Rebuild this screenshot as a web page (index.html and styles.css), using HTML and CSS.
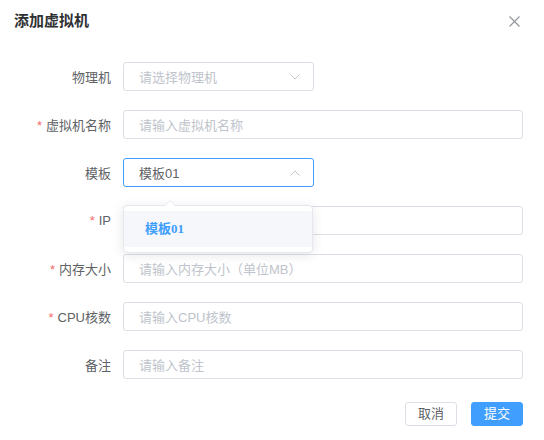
FILE: index.html
```html
<!DOCTYPE html>
<html lang="zh-CN">
<head>
<meta charset="utf-8">
<title>添加虚拟机</title>
<link rel="stylesheet" href="styles.css">
</head>
<body>
<div class="dialog">
  <div class="header">
    <span class="title">添加虚拟机</span>
    <svg class="close" width="11" height="11" viewBox="0 0 11 11"><path d="M0.5 0.5 L10.5 10.5 M10.5 0.5 L0.5 10.5" stroke="#909399" stroke-width="1.1" fill="none"/></svg>
  </div>
  <div class="form">
    <div class="row">
      <label class="label">物理机</label>
      <div class="select">
        <span class="placeholder">请选择物理机</span>
        <svg class="arrow" width="10" height="6" viewBox="0 0 10 6"><path d="M0.5 0.5 L5 5 L9.5 0.5" stroke="#C0C4CC" stroke-width="1" fill="none"/></svg>
      </div>
    </div>
    <div class="row">
      <label class="label"><span class="req">*</span>虚拟机名称</label>
      <div class="input"><span class="placeholder">请输入虚拟机名称</span></div>
    </div>
    <div class="row">
      <label class="label">模板</label>
      <div class="select-wrap">
        <div class="select focus">
          <span class="value">模板01</span>
          <svg class="arrow" width="10" height="6" viewBox="0 0 10 6"><path d="M0.5 5.5 L5 1 L9.5 5.5" stroke="#C0C4CC" stroke-width="1" fill="none"/></svg>
        </div>
        <div class="dropdown">
          <div class="popper-arrow"></div>
          <div class="option">模板01</div>
        </div>
      </div>
    </div>
    <div class="row">
      <label class="label"><span class="req">*</span>IP</label>
      <div class="input"></div>
    </div>
    <div class="row">
      <label class="label"><span class="req">*</span>内存大小</label>
      <div class="input"><span class="placeholder">请输入内存大小（单位MB）</span></div>
    </div>
    <div class="row">
      <label class="label"><span class="req">*</span>CPU核数</label>
      <div class="input"><span class="placeholder">请输入CPU核数</span></div>
    </div>
    <div class="row">
      <label class="label">备注</label>
      <div class="input"><span class="placeholder">请输入备注</span></div>
    </div>
  </div>
  <div class="footer">
    <button class="btn">取消</button>
    <button class="btn primary">提交</button>
  </div>
</div>
</body>
</html>
```
FILE: styles.css
```css
* { box-sizing: border-box; }
html, body { margin: 0; padding: 0; background: #fff; }
body {
  font-family: "Liberation Sans", "Noto Sans CJK SC", sans-serif;
  color: #606266;
}
.dialog {
  width: 544px;
  height: 440px;
  background: #fff;
}
.header {
  display: flex;
  justify-content: space-between;
  align-items: center;
  padding: 12px 24px 0 14px;
  height: 30px;
}
.title {
  font-size: 15px;
  font-weight: bold;
  color: #303133;
  line-height: 18px;
}
.close { display: block; }
.form {
  margin-top: 32px;
  display: flex;
  flex-direction: column;
  gap: 19px;
  padding-right: 21px;
}
.row {
  display: flex;
  align-items: center;
  height: 29px;
}
.label {
  width: 123px;
  flex: none;
  padding-right: 12px;
  text-align: right;
  font-size: 13px;
  color: #606266;
}
.req {
  color: #F56C6C;
  margin-right: 4px;
}
.input, .select {
  height: 29px;
  border: 1px solid #DCDFE6;
  border-radius: 3px;
  display: flex;
  align-items: center;
  padding: 0 15px;
  font-size: 13px;
  background: #fff;
}
.input { flex: 1; }
.select {
  width: 191px;
  justify-content: space-between;
  padding-right: 13px;
}
.select.focus { border-color: #409EFF; }
.select-wrap { position: relative; }
.placeholder { color: #C0C4CC; }
.value { color: #606266; }
.arrow { display: block; }
.dropdown {
  position: absolute;
  left: 0;
  top: 47px;
  width: 190px;
  background: #fff;
  border: 1px solid #E4E7ED;
  border-radius: 4px;
  box-shadow: 0 2px 12px rgba(0, 0, 0, 0.1);
  padding: 5px 0;
  z-index: 5;
}
.popper-arrow {
  position: absolute;
  top: -6px;
  left: 40px;
  width: 0;
  height: 0;
  border-left: 6px solid transparent;
  border-right: 6px solid transparent;
  border-bottom: 6px solid #E4E7ED;
}
.popper-arrow::after {
  content: "";
  position: absolute;
  left: -5px;
  top: 1px;
  border-left: 5px solid transparent;
  border-right: 5px solid transparent;
  border-bottom: 5px solid #fff;
}
.option {
  height: 36px;
  line-height: 36px;
  padding: 0 21px;
  background: #F5F7FA;
  color: #409EFF;
  font-weight: bold;
  font-size: 13px;
  font-family: "Liberation Serif", "Noto Sans CJK SC", serif;
}
.footer {
  display: flex;
  justify-content: flex-end;
  gap: 14px;
  padding-right: 21px;
  margin-top: 23px;
}
.btn {
  width: 52px;
  height: 24px;
  border: 1px solid #DCDFE6;
  border-radius: 3px;
  background: #fff;
  color: #606266;
  font-size: 13px;
  font-family: "Liberation Sans", "Noto Sans CJK SC", sans-serif;
  padding: 0;
  line-height: 22px;
}
.btn.primary {
  background: #409EFF;
  border-color: #409EFF;
  color: #fff;
}
```
